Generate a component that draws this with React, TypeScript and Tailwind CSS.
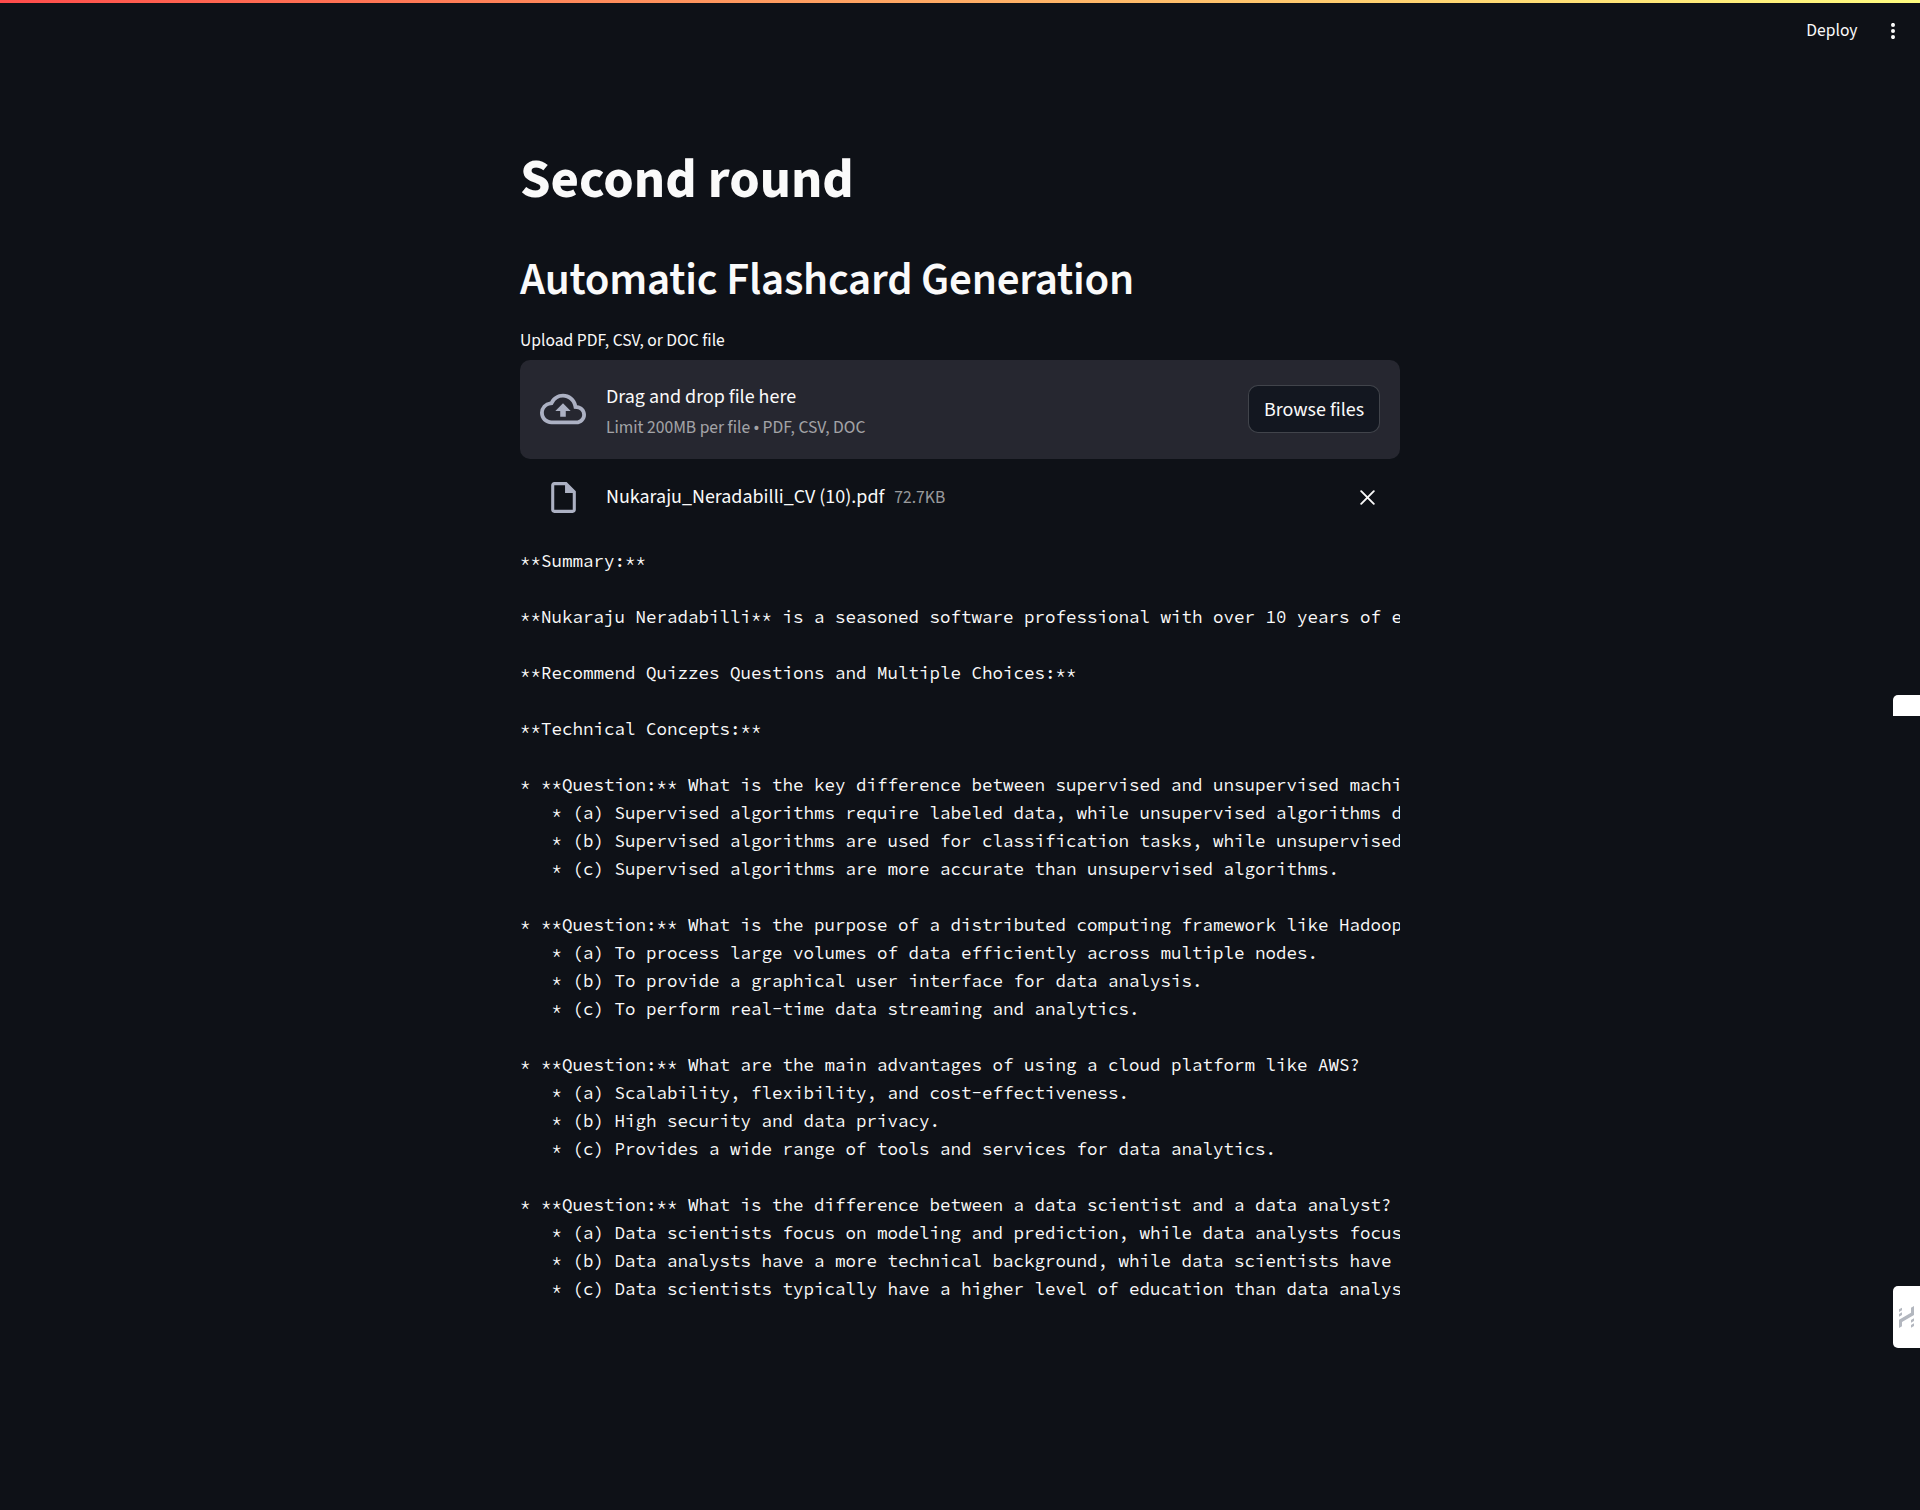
import React from "react";
import { MdOutlineBackup, MdOutlineInsertDriveFile } from "react-icons/md";

const output = `**Summary:**

**Nukaraju Neradabilli** is a seasoned software professional with over 10 years of e

**Recommend Quizzes Questions and Multiple Choices:**

**Technical Concepts:**

* **Question:** What is the key difference between supervised and unsupervised machi
   * (a) Supervised algorithms require labeled data, while unsupervised algorithms d
   * (b) Supervised algorithms are used for classification tasks, while unsupervised
   * (c) Supervised algorithms are more accurate than unsupervised algorithms.

* **Question:** What is the purpose of a distributed computing framework like Hadoop
   * (a) To process large volumes of data efficiently across multiple nodes.
   * (b) To provide a graphical user interface for data analysis.
   * (c) To perform real-time data streaming and analytics.

* **Question:** What are the main advantages of using a cloud platform like AWS?
   * (a) Scalability, flexibility, and cost-effectiveness.
   * (b) High security and data privacy.
   * (c) Provides a wide range of tools and services for data analytics.

* **Question:** What is the difference between a data scientist and a data analyst?
   * (a) Data scientists focus on modeling and prediction, while data analysts focus
   * (b) Data analysts have a more technical background, while data scientists have
   * (c) Data scientists typically have a higher level of education than data analys`;

function Header() {
  return (
    <header className="flex h-[55px] items-center justify-end">
      <span className="mr-[31px] text-[17.5px] leading-7">Deploy</span>
      <svg className="mr-[23.5px] h-4 w-2" viewBox="0 0 8 16" fill="#fafafa">
        <circle cx="4" cy="1.9" r="2" />
        <circle cx="4" cy="8" r="2" />
        <circle cx="4" cy="14.1" r="2" />
      </svg>
    </header>
  );
}

function Uploader() {
  return (
    <section className="mt-[5px] flex h-[99px] items-center rounded-[10px] bg-[#262730] px-5">
      <MdOutlineBackup className="mb-0.5 mr-5 size-[46px] shrink-0 text-[#acb1c3]" />
      <div className="flex flex-1 flex-col pt-[3px]">
        <span className="leading-8">Drag and drop file here</span>
        <span className="text-[17.5px] leading-[29px]  text-[#fafafa]/60">Limit 200MB per file • PDF, CSV, DOC</span>
      </div>
      <button className="mb-px h-12 w-[132px] rounded-[10px] border border-[#fafafa]/20 bg-[#131720] pt-0.5 leading-8">
        Browse files
      </button>
    </section>
  );
}

function UploadedFile() {
  return (
    <div className="mt-[22px] flex h-8 items-center">
      <div className="ml-5 mr-5 flex w-[46px] shrink-0 justify-center text-[#acb1c3]">
        <MdOutlineInsertDriveFile className="size-[37px]" />
      </div>
      <div className="flex flex-1 items-baseline">
        <span className="mr-2.5 leading-8">Nukaraju_Neradabilli_CV (10).pdf</span>
        <span className="text-[17.5px] leading-7 text-[#fafafa]/60">72.7KB</span>
      </div>
      <svg className="mr-[25px] mt-[1px] size-[15px]" viewBox="0 0 15 15" stroke="#fafafa" strokeWidth="1.9" strokeLinecap="round">
        <path d="M1.2 1.2 13.8 13.8M13.8 1.2 1.2 13.8" />
      </svg>
    </div>
  );
}

function SideTabs() {
  return (
    <>
      <div className="absolute right-0 top-[695px] h-[21px] w-[27px] rounded-tl-[5px] bg-white" />
      <div className="absolute right-0 top-[1286px] h-[62px] w-[27px] rounded-l-[5px] bg-white pl-1.5 pt-5">
        <svg className="h-[22px] w-[15px]" viewBox="0 0 45 66" fill="#b3b7bf">
          <path d="M0 10 9 5v8l-9 5zM0 24l9-5v8l-9 5zM0 41 36 20V5l9-5v27L9 48v13l-9 5zM36 42l9-5v8l-9 5zM36 57l9-5v8l-9 5z" />
        </svg>
      </div>
    </>
  );
}

export default function App() {
  return (
    <div className="relative h-[1510px] w-full overflow-hidden bg-[#0e1117] font-['Source_Sans_3','Source_Sans_Pro','Noto_Sans_CJK_SC',sans-serif] text-[20px] text-[#fafafa]">
      <div className="h-[3px] bg-linear-to-r from-[#ff4b4b] to-[#fffd80]" />
      <Header />
      <main className="mx-auto w-[880px] pt-[89px]">
        <h1 className="text-[55px] font-bold leading-[66px]">Second round</h1>
        <h2 className="mt-10 text-[45px] font-semibold leading-[54px] tracking-[-0.005em]">Automatic Flashcard Generation</h2>
        <p className="mt-5 text-[17.5px] leading-7">Upload PDF, CSV, or DOC file</p>
        <Uploader />
        <UploadedFile />
        <pre className="mt-[34px] overflow-hidden font-['Source_Code_Pro','Liberation_Mono',monospace] text-[17.5px] leading-7">
          {output}
        </pre>
      </main>
      <SideTabs />
    </div>
  );
}
